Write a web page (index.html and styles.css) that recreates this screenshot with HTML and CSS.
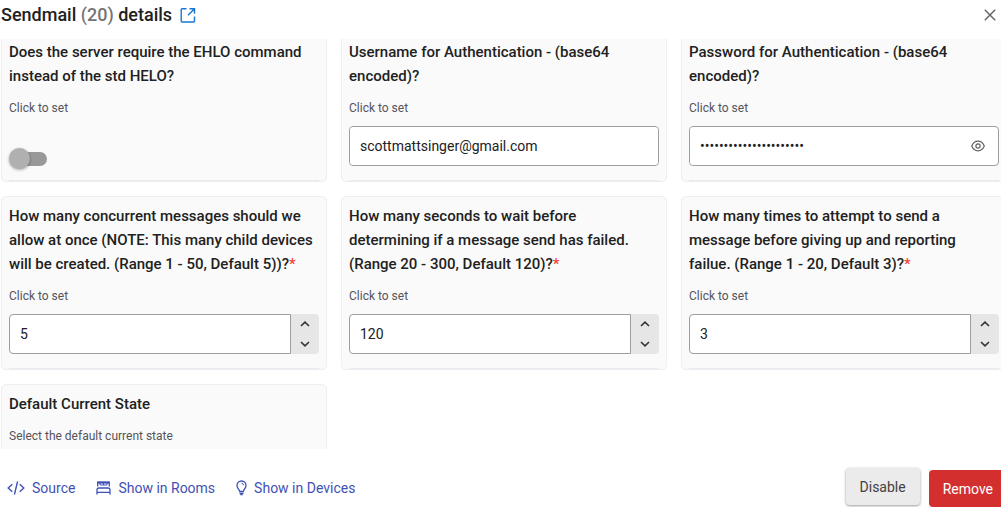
FILE: index.html
```html
<!DOCTYPE html>
<html lang="en">
<head>
<meta charset="utf-8">
<meta name="viewport" content="width=device-width, initial-scale=1">
<title>Sendmail details</title>
<link rel="stylesheet" href="styles.css">
</head>
<body>
<div class="dialog">
  <header class="header">
    <h1 class="title">Sendmail <span class="title-id">(20)</span> details</h1>
    <a class="open-link" href="#" aria-label="Open in new window">
      <svg width="16" height="16" viewBox="0 0 16 16" fill="none" stroke="currentColor" stroke-width="1.4"><path d="M6.5 1.7H2.2Q1.2 1.7 1.2 2.7V14Q1.2 15 2.2 15H13.5Q14.5 15 14.5 14V9.5M8 8.2L14 2.2M9.5 1.7H14.5V6.700"/></svg>
    </a>
    <button class="close" type="button" aria-label="Close">
      <svg width="12" height="12" viewBox="0 0 12 12" fill="none" stroke="currentColor" stroke-width="1.4"><path d="M.8.8L11.200 11.200M11.200.8L.8 11.200"/></svg>
    </button>
  </header>

  <main class="content">
    <div class="cards">
      <section class="card">
        <label class="name" for="ehlo">Does the server require the EHLO command instead of the std HELO?</label>
        <p class="hint">Click to set</p>
        <div class="switch-row"><input class="switch" id="ehlo" type="checkbox" role="switch"></div>
      </section>
      <section class="card">
        <label class="name" for="user">Username for Authentication - (base64 encoded)?</label>
        <p class="hint">Click to set</p>
        <div class="field"><input class="input" id="user" type="text" value="scottmattsinger@gmail.com"></div>
      </section>
      <section class="card">
        <label class="name" for="pass">Password for Authentication - (base64 encoded)?</label>
        <p class="hint">Click to set</p>
        <div class="field">
          <input class="input" id="pass" type="password" value="abcdefghijklmnopqrstuv">
          <button class="reveal" type="button" aria-label="Show password">
            <svg width="14" height="12" viewBox="0 0 14 12" fill="none" stroke="currentColor" stroke-width="1.200"><path d="M.7 6C2 3 4.200 1.200 7 1.200S12 3 13.300 6C12 9 9.800 10.800 7 10.800S2 9 .7 6Z"/><circle cx="7" cy="6" r="2.100"/></svg>
          </button>
        </div>
      </section>

      <section class="card">
        <label class="name" for="concurrent">How many concurrent messages should we allow at once (NOTE: This many child devices will be created. (Range 1 - 50, Default 5))?<span class="required">*</span></label>
        <p class="hint">Click to set</p>
        <div class="stepper">
          <input class="input number" id="concurrent" type="text" inputmode="numeric" value="5">
          <div class="steps">
            <button class="step" type="button" aria-label="Increase"><svg width="10" height="6" viewBox="0 0 10 6"><path d="M1 5L5 1.200L9 5"/></svg></button>
            <button class="step" type="button" aria-label="Decrease"><svg width="10" height="6" viewBox="0 0 10 6"><path d="M1 1L5 4.800L9 1"/></svg></button>
          </div>
        </div>
      </section>
      <section class="card">
        <label class="name" for="wait">How many seconds to wait before determining if a message send has failed. (Range 20 - 300, Default 120)?<span class="required">*</span></label>
        <p class="hint">Click to set</p>
        <div class="stepper">
          <input class="input number" id="wait" type="text" inputmode="numeric" value="120">
          <div class="steps">
            <button class="step" type="button" aria-label="Increase"><svg width="10" height="6" viewBox="0 0 10 6"><path d="M1 5L5 1.200L9 5"/></svg></button>
            <button class="step" type="button" aria-label="Decrease"><svg width="10" height="6" viewBox="0 0 10 6"><path d="M1 1L5 4.800L9 1"/></svg></button>
          </div>
        </div>
      </section>
      <section class="card">
        <label class="name" for="attempts">How many times to attempt to send a message before giving up and reporting failue. (Range 1 - 20, Default 3)?<span class="required">*</span></label>
        <p class="hint">Click to set</p>
        <div class="stepper">
          <input class="input number" id="attempts" type="text" inputmode="numeric" value="3">
          <div class="steps">
            <button class="step" type="button" aria-label="Increase"><svg width="10" height="6" viewBox="0 0 10 6"><path d="M1 5L5 1.200L9 5"/></svg></button>
            <button class="step" type="button" aria-label="Decrease"><svg width="10" height="6" viewBox="0 0 10 6"><path d="M1 1L5 4.800L9 1"/></svg></button>
          </div>
        </div>
      </section>

      <section class="card">
        <h2 class="name">Default Current State</h2>
        <p class="hint">Select the default current state</p>
      </section>
    </div>
  </main>

  <footer class="footer">
    <nav class="links">
      <a class="link" href="#"><svg width="18" height="16" viewBox="0 0 18 16" fill="none" stroke="currentColor" stroke-width="1.400"><path d="M5.300 4.200L1.200 8L5.300 11.800M12.700 4.200L16.800 8L12.700 11.800M10.600 1.500L7.400 14.500"/></svg>Source</a>
      <a class="link" href="#"><svg width="15" height="16" viewBox="0 0 15 16" fill="none" stroke="currentColor" stroke-width="1.300"><path d="M1.700 6.500V2.200H13.300V6.500"/><path d="M1.500 2.600H13.500" stroke-width="2"/><path d="M4 3V5H11V3M7.500 3V5" stroke-width="1"/><path d="M1 14.500V10Q1 8 3 8H12Q14 8 14 10V14.500M1 12.300H14"/></svg>Show in Rooms</a>
      <a class="link" href="#"><svg width="11" height="16" viewBox="0 0 11 16" fill="none" stroke="currentColor" stroke-width="1.300"><path d="M3.700 11.500C3.500 9.500 1 8.300 1 5.500A4.500 4.500 0 0 1 10 5.500C10 8.300 7.500 9.500 7.300 11.500Z"/><path d="M5.500 3.200A2.300 2.300 0 0 1 7.600 5.300" stroke-width="1"/><path d="M3.500 13.300H7.500M4.300 14.500H6.700"/></svg>Show in Devices</a>
    </nav>
    <div class="actions">
      <button class="button disable" type="button">Disable</button>
      <button class="button remove" type="button">Remove</button>
    </div>
  </footer>
</div>
</body>
</html>
```
FILE: styles.css
```css
* { box-sizing: border-box; }
body {
  margin: 0;
  overflow: hidden;
  background: #fff;
  color: #212121;
  font-family: Roboto, "Liberation Sans", sans-serif;
}
button { border: 0; padding: 0; font: inherit; cursor: pointer; }
svg { display: block; flex: none; }
.dialog {
  display: flex;
  flex-direction: column;
  height: 100vh;
}
.header {
  display: flex;
  align-items: center;
  gap: 8px;
  padding: 3px 5px 12px 1px;
}
.title {
  margin: 0;
  font-size: 18px;
  font-weight: 500;
  line-height: 24px;
}
.title-id { color: #757575; }
.open-link { color: #1976d2; }
.close {
  margin-left: auto;
  background: none;
  color: #616161;
}
.content {
  flex: 1;
  min-height: 0;
  overflow: hidden;
}
.cards {
  display: grid;
  grid-template-columns: repeat(3, 1fr);
  gap: 14px;
  margin: -7px -6px 0 1px;
}
.card {
  display: flex;
  flex-direction: column;
  padding: 7px 7px 12px;
  border: 1px solid #eee;
  border-radius: 5px;
  background: #fafafa;
}
.card::after {
  content: "";
  height: 1px;
  margin-top: 14px;
  margin-bottom: -12px;
  background: #eaeaf2;
}
.name {
  display: block;
  margin: 0;
  font-size: 15px;
  font-weight: 500;
  line-height: 24px;
}
.required { color: #f44336; }
.hint {
  margin: 10px 0 8px;
  color: #54545a;
  font-size: 12px;
  line-height: 20px;
}
.field {
  display: flex;
  height: 40px;
  border: 1px solid #9e9e9e;
  border-radius: 4px;
  background: #fff;
}
.input {
  flex: 1;
  min-width: 0;
  padding: 0 10px;
  border: 0;
  border-radius: 4px;
  outline: 0;
  background: #fff;
  color: #212121;
  font-family: inherit;
  font-size: 14px;
}
.reveal {
  padding: 0 13px;
  background: none;
  color: #616161;
}
.stepper {
  display: flex;
  height: 40px;
}
.number {
  border: 1px solid #9e9e9e;
  border-radius: 4px 0 0 4px;
}
.steps {
  display: flex;
  flex-direction: column;
  width: 28px;
  border-radius: 0 4px 4px 0;
  background: #e6e6e6;
}
.step {
  display: flex;
  flex: 1;
  align-items: center;
  justify-content: center;
  background: none;
}
.step path {
  fill: none;
  stroke: #333;
  stroke-width: 1.6;
}
.switch-row {
  display: flex;
  align-items: center;
  height: 40px;
  padding-top: 26px;
}
.switch {
  position: relative;
  width: 38px;
  height: 22px;
  margin: 0;
  appearance: none;
}
.switch::before {
  content: "";
  display: block;
  height: 14px;
  margin: 4px 0 4px 4px;
  border-radius: 7px;
  background: #999;
}
.switch::after {
  content: "";
  position: absolute;
  top: 0;
  left: 0;
  width: 21px;
  height: 21px;
  border-radius: 50%;
  background: #b0b0b0;
  box-shadow: 0 1px 3px rgba(0, 0, 0, .35);
}
.footer {
  display: flex;
  justify-content: space-between;
  height: 58px;
  padding: 19px 0 0 7px;
}
.links {
  display: flex;
  align-items: center;
  gap: 21px;
  height: 40px;
}
.link {
  display: flex;
  align-items: center;
  gap: 7px;
  color: #3f51b5;
  font-size: 14px;
  text-decoration: none;
}
.actions {
  display: flex;
  align-items: flex-start;
  gap: 9px;
}
.button {
  height: 37px;
  padding: 0 14px;
  border-radius: 4px;
  font-size: 14px;
}
.disable {
  background: #ebebeb;
  color: #424242;
  box-shadow: 0 1px 3px rgba(0, 0, 0, .4);
}
.remove {
  margin: 2px -6px 0 0;
  background: #d32f2f;
  color: #fff;
}
```
